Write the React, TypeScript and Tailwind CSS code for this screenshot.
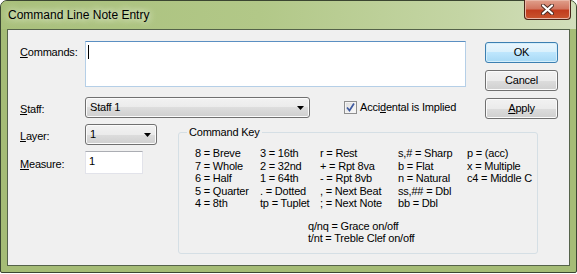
import React from 'react';

function U({ children }: { children: React.ReactNode }) {
  return <span className="underline underline-offset-[1px]">{children}</span>;
}

function DropArrow() {
  return (
    <svg width="7" height="4" viewBox="0 0 7 4">
      <path d="M0 0h7L3.5 4z" fill="#000" />
    </svg>
  );
}

function Button({ children, primary }: { children: React.ReactNode; primary?: boolean }) {
  return (
    <div
      className={
        primary
          ? 'w-[73px] h-[21px] rounded-[3px] border border-[#3c7fb1] bg-[linear-gradient(#eaf6fd,#d9f0fc_50%,#bee6fd_50%,#a7d9f5)] shadow-[inset_0_0_0_1px_#d4eefb] flex items-center justify-center'
          : 'w-[73px] h-[21px] rounded-[3px] border border-[#707070] bg-[linear-gradient(#f2f2f2,#ebebeb_50%,#dddddd_50%,#cfcfcf)] shadow-[inset_0_0_0_1px_#fbfbfb] flex items-center justify-center'
      }
    >
      {children}
    </div>
  );
}

function Select({ width, value }: { width: string; value: string }) {
  return (
    <div
      className={`${width} h-[21px] rounded-[3px] border border-[#707070] bg-[linear-gradient(#f2f2f2,#ebebeb_50%,#dddddd_50%,#cfcfcf)] shadow-[inset_0_0_0_1px_#fbfbfb] flex items-center pl-[4px] pr-[5px]`}
    >
      <span className="flex-1">{value}</span>
      <DropArrow />
    </div>
  );
}

const keyCols: { w: string; items: string[] }[] = [
  { w: 'w-[65px]', items: ['8 = Breve', '7 = Whole', '6 = Half', '5 = Quarter', '4 = 8th'] },
  { w: 'w-[60px]', items: ['3 = 16th', '2 = 32nd', '1 = 64th', '. = Dotted', 'tp = Tuplet'] },
  { w: 'w-[78px]', items: ['r = Rest', '+ = Rpt 8va', '- = Rpt 8vb', ', = Next Beat', '; = Next Note'] },
  { w: 'w-[69px]', items: ['s,# = Sharp', 'b = Flat', 'n = Natural', 'ss,## = Dbl', 'bb = Dbl'] },
  { w: 'w-[70px]', items: ['p = (acc)', 'x = Multiple', 'c4 = Middle C'] },
];

export default function App() {
  return (
    <div className="w-[577px] h-[274px] bg-white font-['Liberation_Sans',Arial,sans-serif] text-[11px] tracking-[-0.2px] text-black">
      <div className="w-[577px] h-[273px] border border-[#3b4631] rounded-t-[7px] rounded-b-[2px] bg-[#a5bc76] flex flex-col px-[6px] pb-[6px]">
        {/* title bar */}
        <div className="h-[28px] flex items-start -mx-[6px] px-[6px] rounded-t-[6px] bg-[linear-gradient(90deg,#a9c07b,#b2c888_45%,#c4d5a4_80%,#d2debb)]">
          <div className="mt-[7px] pl-[1px] text-[12px] tracking-normal leading-[15px] [text-shadow:0_0_6px_#e9f0dc,0_0_10px_#e9f0dc]">
            Command Line Note Entry
          </div>
          <div className="ml-auto -mr-[1px] -mt-[1px] w-[47px] h-[20px] rounded-b-[4px] border border-t-0 border-[#4a2418] bg-[linear-gradient(#e0a08c,#d27660_45%,#c13c1e_55%,#c9552f)] shadow-[inset_0_0_0_1px_#e9b6a6] flex items-center justify-center">
            <svg width="13" height="11" viewBox="0 0 13 11">
              <path d="M2 1.5l9 8M11 1.5l-9 8" stroke="#4a2a22" strokeWidth="4" strokeLinecap="round" />
              <path d="M2 1.5l9 8M11 1.5l-9 8" stroke="#ffffff" strokeWidth="2.2" strokeLinecap="round" />
            </svg>
          </div>
        </div>

        {/* client area */}
        <div className="flex-1 border border-[#55634a] bg-[#f0f0f0] flex">
          <div className="w-[465px] flex flex-col">
            <div className="mt-[11px] flex">
              <div className="w-[77px] pl-[12px] pt-[5px] leading-[13px]">
                <U>C</U>ommands:
              </div>
              <div className="w-[381px] h-[46px] bg-white border border-[#b5cfe7] border-t-[#5b8fc2] pl-[2px] pt-[3px]">
                <div className="w-px h-[14px] bg-black" />
              </div>
            </div>

            <div className="mt-[10px] flex items-center h-[21px]">
              <div className="w-[77px] pl-[12px] pt-[3px]">
                <U>S</U>taff:
              </div>
              <Select width="w-[225px]" value="Staff 1" />
              <div className="ml-[34px] w-[13px] h-[13px] border border-[#8f8f8f] bg-[linear-gradient(135deg,#dcdcdc,#fbfbfb)] shadow-[inset_0_0_0_1px_#f4f4f4] flex items-center justify-center">
                <svg width="11" height="11" viewBox="0 0 11 11">
                  <path d="M2 5.5l2.5 3L9 1.5" fill="none" stroke="#3e5aa0" strokeWidth="1.7" />
                </svg>
              </div>
              <div className="ml-[3px]">
                Acci<U>d</U>ental is Implied
              </div>
            </div>

            <div className="mt-[6px] flex items-start">
              <div className="w-[149px] flex flex-col">
                <div className="h-[21px] flex items-center">
                  <div className="w-[77px] pl-[12px] pt-[3px]">
                    <U>L</U>ayer:
                  </div>
                  <Select width="w-[72px]" value="1" />
                </div>
                <div className="mt-[6px] h-[23px] flex items-center">
                  <div className="w-[77px] pl-[12px] pt-[3px]">
                    <U>M</U>easure:
                  </div>
                  <div className="w-[58px] h-[23px] bg-white border border-[#e2e3ea] border-t-[#abadb3] pl-[3px] pt-[3px] leading-[13px]">
                    1
                  </div>
                </div>
              </div>

              <div className="ml-[21px] mt-[8px] w-[360px] h-[122px] relative border border-[#d5dfe5] rounded-[3px] pl-[16px] pt-[14px]">
                <span className="absolute left-[8px] -top-[7px] px-[2px] bg-[#f0f0f0] leading-[13px]">Command Key</span>
                <div className="flex leading-[12.5px]">
                  {keyCols.map((c, i) => (
                    <div key={i} className={`${c.w} flex flex-col`}>
                      {c.items.map((t) => (
                        <div key={t} className="whitespace-pre">{t}</div>
                      ))}
                    </div>
                  ))}
                </div>
                <div className="mt-[10px] pl-[113px] leading-[12.5px]">
                  <div>q/nq = Grace on/off</div>
                  <div>t/nt = Treble Clef on/off</div>
                </div>
              </div>
            </div>
          </div>

          <div className="ml-[12px] pt-[12px] flex flex-col gap-[7px]">
            <Button primary>OK</Button>
            <Button>Cancel</Button>
            <Button>
              <span>
                <U>A</U>pply
              </span>
            </Button>
          </div>
        </div>
      </div>
    </div>
  );
}
